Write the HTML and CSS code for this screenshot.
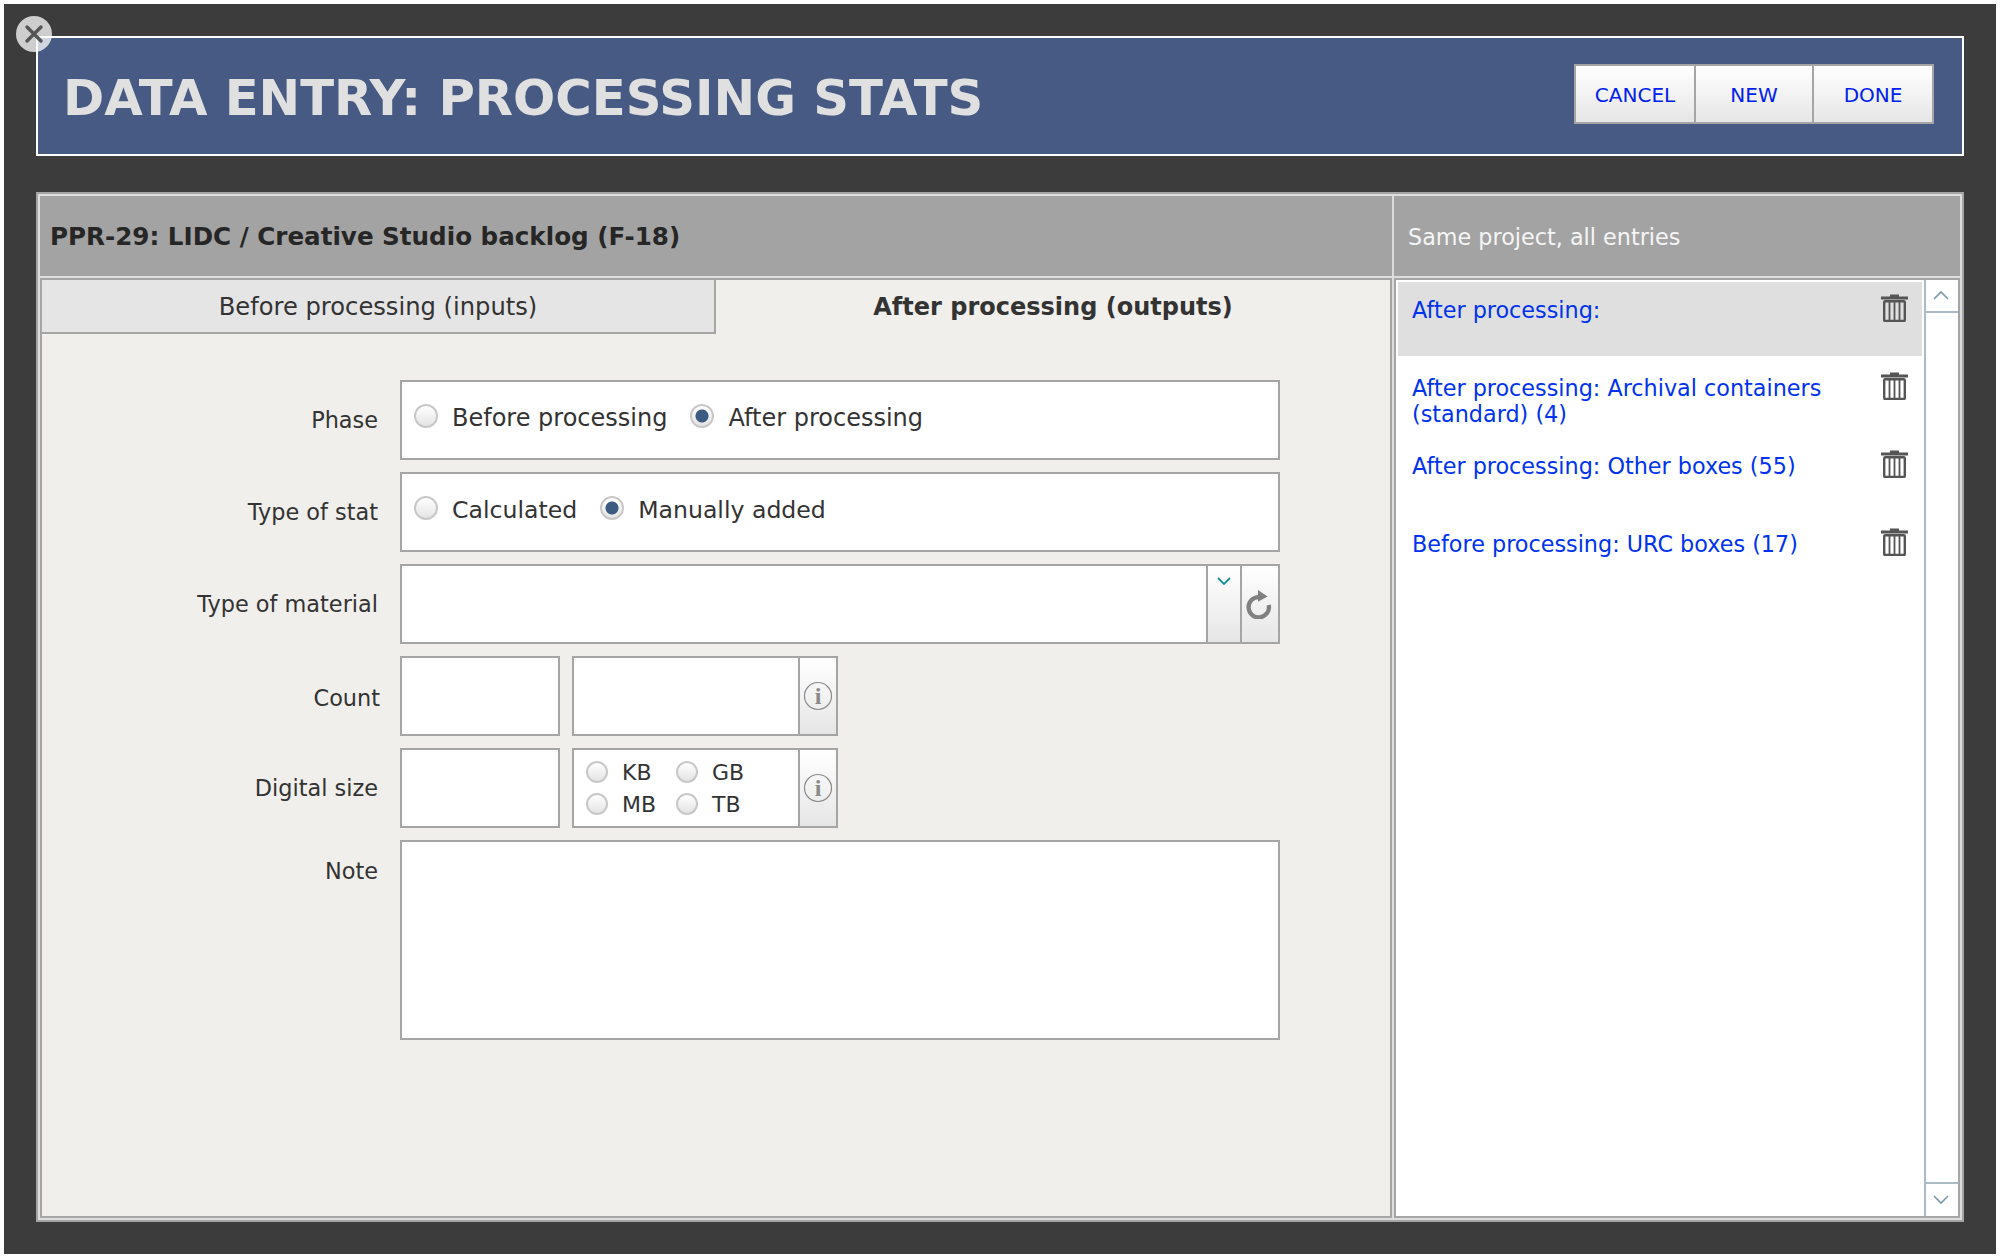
FILE: index.html
```html
<!DOCTYPE html>
<html lang="en">
<head>
    <meta charset="UTF-8">
    <title>Data Entry: Processing Stats</title>
    <link rel="stylesheet" href="styles.css">
</head>
<body>

    <svg class="defs" width="0" height="0">
      <symbol id="trash" viewBox="0 0 27 28">
        <path d="M9 3V0.5H18V3Z" fill="#555"/>
        <rect x="0" y="2.5" width="27" height="3" fill="#555"/>
        <rect x="3.2" y="7.2" width="20.6" height="19.8" rx="1" fill="none" stroke="#555" stroke-width="2.4"/>
        <path d="M8.5 7V27M13.5 7V27M18.5 7V27" stroke="#555" stroke-width="1.8"/>
      </symbol>
    </svg>

    <div class="window">
      <div class="close">
        <svg width="22" height="22" viewBox="0 0 22 22"><path d="M4 4L18 18M18 4L4 18" stroke="#555" stroke-width="3.4" stroke-linecap="round"/></svg>
      </div>

      <header class="title-bar">
        <h1>DATA ENTRY: PROCESSING STATS</h1>
        <div class="actions">
          <a class="action">CANCEL</a>
          <a class="action">NEW</a>
          <a class="action">DONE</a>
        </div>
      </header>

      <div class="panel">
        <div class="panel-head record">PPR-29: LIDC / Creative Studio backlog (F-18)</div>
        <div class="panel-head siblings">Same project, all entries</div>

        <section class="editor">
          <div class="tabs">
            <div class="tab">Before processing (inputs)</div>
            <div class="tab active">After processing (outputs)</div>
          </div>

          <form class="form">
            <div class="row">
              <label class="label">Phase</label>
              <div class="field radios">
                <input class="radio" type="radio" name="phase"><span class="choice">Before processing</span>
                <input class="radio" type="radio" name="phase" checked><span class="choice">After processing</span>
              </div>
            </div>
            <div class="row">
              <label class="label">Type of stat</label>
              <div class="field radios tight">
                <input class="radio" type="radio" name="kind"><span class="choice">Calculated</span>
                <input class="radio" type="radio" name="kind" checked><span class="choice">Manually added</span>
              </div>
            </div>
            <div class="row">
              <label class="label">Type of material</label>
              <div class="field combo">
                <div class="combo-input"></div>
                <div class="btn drop">
                  <svg width="16" height="10" viewBox="0 0 16 10"><path d="M2 2L8 8L14 2" fill="none" stroke="#1a8f96" stroke-width="1.8"/></svg>
                </div>
                <div class="btn reload">
                  <svg width="28" height="30" viewBox="0 0 26 28"><path d="M14 7.5A9.5 9.5 0 1 0 23 15" fill="none" stroke="#808080" stroke-width="4"/><path d="M13 1L22 7L13 12Z" fill="#808080"/></svg>
                </div>
              </div>
            </div>
            <div class="row">
              <label class="label nudge">Count</label>
              <div class="field short"></div>
              <div class="field unit">
                <div class="unit-body"></div>
                <div class="btn info">
                  <svg width="30" height="30" viewBox="0 0 30 30"><circle cx="15" cy="15" r="13.5" fill="none" stroke="#8a8a8a" stroke-width="1.2"/><text x="15" y="23" text-anchor="middle" class="info-i">i</text></svg>
                </div>
              </div>
            </div>
            <div class="row">
              <label class="label">Digital size</label>
              <div class="field short"></div>
              <div class="field unit">
                <div class="unit-body sizes">
                  <div class="size"><input class="radio small" type="radio" name="size">KB</div>
                  <div class="size"><input class="radio small" type="radio" name="size">GB</div>
                  <div class="size"><input class="radio small" type="radio" name="size">MB</div>
                  <div class="size"><input class="radio small" type="radio" name="size">TB</div>
                </div>
                <div class="btn info">
                  <svg width="30" height="30" viewBox="0 0 30 30"><circle cx="15" cy="15" r="13.5" fill="none" stroke="#8a8a8a" stroke-width="1.2"/><text x="15" y="23" text-anchor="middle" class="info-i">i</text></svg>
                </div>
              </div>
            </div>
            <div class="row note-row">
              <label class="label">Note</label>
              <div class="field note"></div>
            </div>
          </form>
        </section>

        <aside class="entries">
          <ul class="entry-list">
            <li class="entry selected">
              <a>After processing:</a>
              <svg class="trash" width="27" height="28"><use href="#trash"/></svg>
            </li>
            <li class="entry">
              <a>After processing: Archival containers (standard) (4)</a>
              <svg class="trash" width="27" height="28"><use href="#trash"/></svg>
            </li>
            <li class="entry">
              <a>After processing: Other boxes (55)</a>
              <svg class="trash" width="27" height="28"><use href="#trash"/></svg>
            </li>
            <li class="entry">
              <a>Before processing: URC boxes (17)</a>
              <svg class="trash" width="27" height="28"><use href="#trash"/></svg>
            </li>
          </ul>
          <div class="scrollbar">
            <div class="scroll-btn up">
              <svg width="18" height="10" viewBox="0 0 18 10"><path d="M2 9L9 2L16 9" fill="none" stroke="#7b97aa" stroke-width="1.6"/></svg>
            </div>
            <div class="scroll-btn down">
              <svg width="18" height="10" viewBox="0 0 18 10"><path d="M2 1L9 8L16 1" fill="none" stroke="#7b97aa" stroke-width="1.6"/></svg>
            </div>
          </div>
        </aside>
      </div>
    </div>

</body>
</html>
```

FILE: styles.css
```css
* {
    box-sizing: border-box;
}

body {
    margin: 0;
    padding: 4px;
    height: 1258px;
    background-color: #fff;
    color: #333;
    font-family: "DejaVu Sans", Verdana, sans-serif;
    font-size: 22.4px;
}

.defs {
    position: absolute;
}

.window {
    position: relative;
    height: 1250px;
    padding: 32px;
    background-color: #3c3c3c;
}

.close {
    position: absolute;
    left: 12px;
    top: 12px;
    z-index: 2;
    width: 36px;
    height: 36px;
    border-radius: 50%;
    background-color: rgba(255, 255, 255, 0.75);
    display: flex;
    align-items: center;
    justify-content: center;
}

.title-bar {
    height: 120px;
    padding: 0 28px 4px 25px;
    background-color: #475a83;
    border: 2px solid #fff;
    display: flex;
    align-items: center;
    justify-content: space-between;
}

h1 {
    margin: 7px 0 0;
    color: #e0e0e0;
    font-size: 49.7px;
    font-weight: bold;
}

.actions {
    display: flex;
    height: 60px;
    border: 2px solid #a5a5a5;
}

.action {
    display: flex;
    align-items: center;
    justify-content: center;
    width: 118px;
    padding-top: 2px;
    border-left: 2px solid #a5a5a5;
    background: linear-gradient(#fff, #e6e6e6);
    color: #0020f0;
    font-size: 20px;
}

.action:first-child {
    width: 118px;
    border-left: none;
}

.action:last-child {
    width: 120px;
}

.panel {
    margin-top: 36px;
    height: 1030px;
    padding: 2px;
    border: 2px solid #a5a5a5;
    background-color: #ddd;
    display: grid;
    grid-template-columns: 1352px 566px;
    grid-template-rows: 80px 940px;
    gap: 2px 2px;
}

.panel-head {
    display: flex;
    align-items: center;
    background-color: #a3a3a3;
}

.record {
    padding-left: 10px;
    color: #262626;
    font-size: 24.6px;
    font-weight: bold;
}

.siblings {
    padding: 2px 0 0 14px;
    color: #f5f5f5;
    font-size: 22.3px;
}

.editor {
    border: 2px solid #a5a5a5;
    background-color: #f0efeb;
}

.tabs {
    display: flex;
    height: 54px;
    font-size: 24px;
}

.tab {
    flex: 1;
    display: flex;
    align-items: center;
    justify-content: center;
    padding-top: 2px;
    font-size: 24.2px;
    background-color: #e5e5e5;
    border-right: 2px solid #a5a5a5;
    border-bottom: 2px solid #a5a5a5;
}

.tab.active {
    flex: 0 0 674px;
    padding-top: 0;
    font-size: 24px;
    background-color: transparent;
    border: none;
    font-weight: bold;
}

.form {
    padding: 46px 0 0 0;
    display: flex;
    flex-direction: column;
    gap: 12px;
}

.row {
    display: flex;
    align-items: center;
    gap: 12px;
}

.label {
    flex: 0 0 336px;
    margin-right: 10px;
    text-align: right;
}

.label.nudge {
    position: relative;
    left: 2px;
    top: 2px;
}

.field {
    height: 80px;
    border: 2px solid #a5a5a5;
    background-color: #fff;
}

.radios {
    width: 880px;
    padding: 0 0 8px 12px;
    display: flex;
    align-items: center;
    font-size: 24px;
}

.radios.tight {
    font-size: 23.6px;
}

.radio {
    appearance: none;
    flex: none;
    width: 24px;
    height: 24px;
    margin: 0 14px 0 0;
    border: 2px solid #c8c8c8;
    border-radius: 50%;
    background: linear-gradient(#fff, #e4e4e4);
}

.radio:checked {
    background: radial-gradient(circle, #3d5a80 0, #3d5a80 6px, transparent 7px), linear-gradient(#fff, #e4e4e4);
}

.radio.small {
    width: 22px;
    height: 22px;
}

.choice {
    margin: 4px 23px 0 0;
}

.combo {
    width: 880px;
    display: flex;
}

.combo-input {
    flex: 1;
}

.btn {
    display: flex;
    justify-content: center;
    background: linear-gradient(#fff, #e6e6e6);
    border-left: 2px solid #a5a5a5;
}

.drop {
    flex: 0 0 34px;
    padding-top: 10px;
}

.reload {
    flex: 0 0 38px;
    align-items: center;
    padding-right: 5px;
}

.short {
    width: 160px;
}

.unit {
    width: 266px;
    display: flex;
}

.unit-body {
    flex: 1;
}

.info {
    flex: 0 0 38px;
    align-items: center;
}

.info-i {
    font-family: "Liberation Serif", serif;
    font-weight: bold;
    font-size: 24px;
    fill: #8a8a8a;
}

.sizes {
    padding: 6px 0 0 12px;
    display: grid;
    grid-template-columns: 90px 90px;
    grid-auto-rows: 32px;
    align-items: center;
    font-size: 22px;
}

.size {
    display: flex;
    align-items: center;
}

.note-row {
    align-items: flex-start;
}

.note-row .label {
    padding-top: 18px;
}

.note {
    width: 880px;
    height: 200px;
}

.entries {
    border: 2px solid #a5a5a5;
    background-color: #fff;
    display: flex;
}

.entry-list {
    flex: 1;
    margin: 0;
    padding: 2px 2px 0 2px;
    list-style: none;
    display: flex;
    flex-direction: column;
    gap: 4px;
}

.entry {
    height: 74px;
    padding: 12px 14px 0 14px;
    line-height: 26px;
    font-size: 22.3px;
    color: #0033ee;
    display: flex;
    align-items: flex-start;
    justify-content: space-between;
}

.entry a {
    width: 440px;
    margin-top: 3px;
}

.entry.selected {
    background-color: #dfdfdf;
}

.trash {
    flex: none;
}

.scrollbar {
    flex: 0 0 34px;
    border-left: 2px solid #a9bcc6;
    display: flex;
    flex-direction: column;
    justify-content: space-between;
}

.scroll-btn {
    height: 34px;
    padding-right: 2px;
    display: flex;
    align-items: center;
    justify-content: center;
}

.scroll-btn.up {
    height: 33px;
    padding-bottom: 2px;
    border-bottom: 2px solid #a9bcc6;
}

.scroll-btn.down {
    border-top: 2px solid #a9bcc6;
}
```
